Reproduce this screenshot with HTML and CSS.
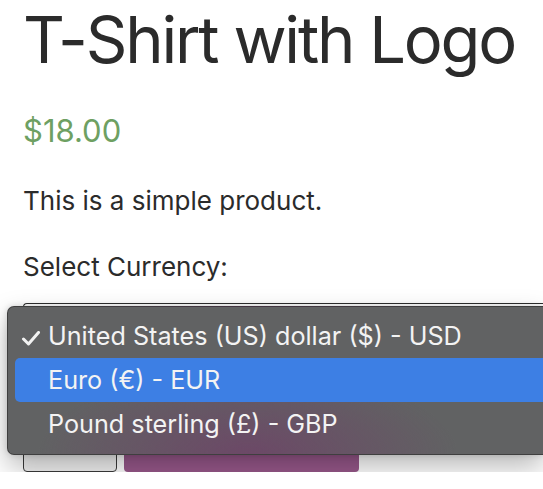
FILE: index.html
```html
<!DOCTYPE html>
<html lang="en">
<head>
<meta charset="utf-8">
<title>T-Shirt with Logo</title>
<link rel="stylesheet" href="styles.css">
</head>
<body>
<main class="product">
  <h1 class="title">T-Shirt with Logo</h1>
  <p class="price">$18.00</p>
  <p class="desc">This is a simple product.</p>
  <div class="currency">
    <label class="label">Select Currency:</label>
    <div class="select"></div>
    <ul class="menu">
      <li class="opt"><svg class="check" width="20" height="15" viewBox="0 0 20 15"><path d="M2.5 8 L7.5 13 L17.5 1.5" fill="none" stroke="#f2f2f2" stroke-width="3" stroke-linecap="round" stroke-linejoin="round"/></svg>United States (US) dollar ($) - USD</li>
      <li class="opt active">Euro (€) - EUR</li>
      <li class="opt">Pound sterling (£) - GBP</li>
    </ul>
  </div>
  <div class="cart">
    <div class="qty"></div>
    <button class="add"></button>
  </div>
</main>
</body>
</html>
```

FILE: styles.css
```css
html, body {
  margin: 0;
  padding: 0;
  background: #ffffff;
}
body {
  font-family: Inter, "Liberation Sans", Arial, sans-serif;
  color: #2b2b2b;
}
.product {
  padding: 0 0 0 23px;
  display: flex;
  flex-direction: column;
}
.title {
  margin: 0;
  font-size: 65px;
  line-height: 79px;
  font-weight: 400;
  letter-spacing: -2.2px;
}
.price {
  margin: 32px 0 0;
  font-size: 31px;
  line-height: 40px;
  color: #6ea062;
}
.desc {
  margin: 34px 0 0;
  font-size: 26px;
  line-height: 32px;
}
.currency {
  position: relative;
  margin-top: 34px;
  display: flex;
  flex-direction: column;
}
.label {
  font-size: 26px;
  line-height: 32px;
}
.select {
  margin-top: 20px;
  height: 40px;
  border: 1px solid #2e2e2e;
  border-right: none;
  border-radius: 4px 0 0 4px;
}
.menu {
  position: absolute;
  left: -16px;
  top: 55px;
  right: 0;
  margin: 0;
  padding: 7px 0 8px;
  list-style: none;
  border-radius: 7px 0 0 7px;
  border: 1px solid rgba(40, 40, 40, 0.6);
  border-right: none;
  background:
    radial-gradient(ellipse 210px 85px at 240px 100%, rgba(112, 62, 104, 0.72), rgba(112, 62, 104, 0) 100%),
    #616263;
  box-shadow: 0 12px 28px rgba(0, 0, 0, 0.28), 0 0 6px rgba(0, 0, 0, 0.15);
  z-index: 2;
}
.opt {
  position: relative;
  height: 44px;
  line-height: 44px;
  padding-left: 40px;
  font-size: 25.2px;
  color: #f3f3f3;
  white-space: nowrap;
}
.opt.active {
  background: #3d7fe4;
  margin-left: 7px;
  padding-left: 33px;
  border-radius: 5px 0 0 5px;
}
.check {
  position: absolute;
  left: 13px;
  top: 17px;
}
.cart {
  margin-top: 85px;
  display: flex;
  gap: 7px;
}
.qty {
  width: 92px;
  height: 40px;
  border: 1px solid #3a3a3a;
  border-radius: 4px;
  background: #f2f2f2;
}
.add {
  width: 235px;
  height: 42px;
  border: none;
  border-radius: 4px;
  background: #98588b;
}
```
